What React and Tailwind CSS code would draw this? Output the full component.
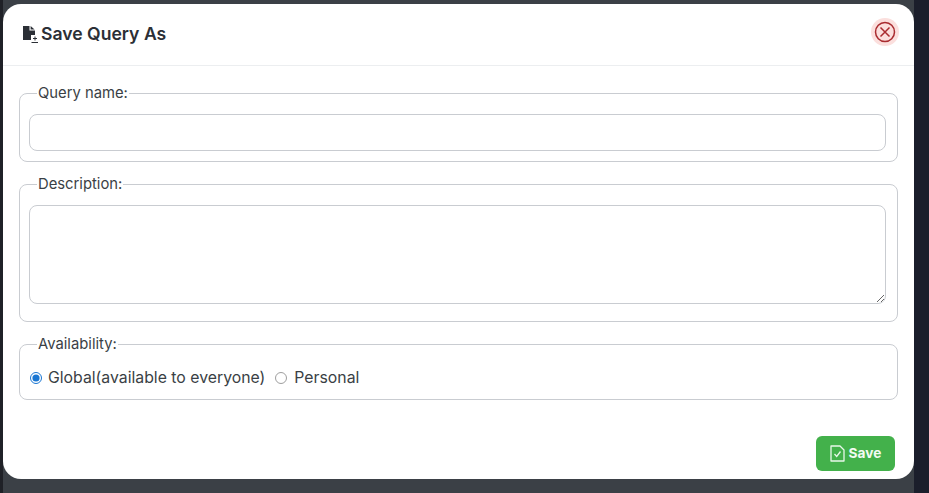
const fieldsetCls = "border border-[#c9ccd1] rounded-lg pl-[9px] pr-[11px] pb-[10px] m-0 min-w-0";
const legendCls = "ml-[8px] px-[1px] text-[14.8px] leading-5 text-[#3a3f45]";

function FileIcon() {
  return (
    <svg width="17" height="20" viewBox="0 0 17 20" className="shrink-0">
      <path d="M1 2h6.500v4.500h5.500V11H9v5H1z" fill="#2b2f36" />
      <path d="M8.600 2l4 3.500h-4z" fill="#2b2f36" />
      <path d="M13 12.500v4M11 14.500h4" stroke="#2b2f36" strokeWidth="1" />
      <path d="M9.500 18.500h6.500" stroke="#2b2f36" strokeWidth="1" />
    </svg>
  );
}

function CloseIcon() {
  return (
    <div className="w-[28px] h-[28px] rounded-full bg-[#fbdfdd] flex items-center justify-center">
      <svg width="22" height="22" viewBox="0 0 22 22" fill="none" stroke="#a92b2f" strokeWidth="1.5">
        <circle cx="11" cy="11" r="9.500" />
        <path d="M6.500 6.500l9 9M15.500 6.500l-9 9" />
      </svg>
    </div>
  );
}

function SaveIcon() {
  return (
    <svg width="15" height="17" viewBox="0 0 15 17" fill="none" stroke="#e9f7ea" strokeWidth="1.300">
      <path d="M1 1h9l4 4v11H1z" strokeLinejoin="round" />
      <path d="M4.500 9l2.200 2.500 3.800-5" />
    </svg>
  );
}

export default function App() {
  return (
    <div className="w-[929px] h-[493px] flex overflow-hidden bg-[#1b1e2b] font-['Inter','Liberation_Sans',sans-serif]">
      <div className="w-[3px] shrink-0 bg-[#1f2127]" />
      <div className="w-[911px] shrink-0 bg-[#3b4046] pt-[4px] h-full">
        <div className="w-full h-[475px] bg-white rounded-[18px] flex flex-col">
          <div className="h-[62px] shrink-0 border-b border-[#eceef0] flex items-center justify-between pl-[19px] pr-[15px] pb-[5px]">
            <div className="flex items-center gap-[2px] mt-[4px]">
              <FileIcon />
              <span className="text-[17.6px] font-semibold text-[#2b2f36]">Save Query As</span>
            </div>
            <CloseIcon />
          </div>

          <div className="flex flex-col gap-[12px] pl-[16px] pr-[16px] pt-[17px]">
            <fieldset className={fieldsetCls}>
              <legend className={legendCls}>Query name:</legend>
              <input type="text" className="block w-full h-[37px] mt-[11px] border border-[#c9ccd1] rounded-lg bg-white" />
            </fieldset>

            <fieldset className={fieldsetCls + " pb-[17px]"}>
              <legend className={legendCls}>Description:</legend>
              <textarea className="block w-full h-[99px] mt-[11px] border border-[#c9ccd1] rounded-lg bg-white" />
            </fieldset>

            <fieldset className={fieldsetCls}>
              <legend className={legendCls}>Availability:</legend>
              <div className="flex items-center h-[24px] mt-[12px] -mb-[1px] ml-[1px] text-[15.8px] text-[#3a3f45]">
                <input type="radio" name="availability" defaultChecked className="w-[12px] h-[12px] m-0 accent-[#1976d2]" />
                <span className="ml-[6px]">Global(available to everyone)</span>
                <input type="radio" name="availability" className="w-[12px] h-[12px] m-0 ml-[10px] opacity-70" />
                <span className="ml-[7px]">Personal</span>
              </div>
            </fieldset>
          </div>

          <div className="flex justify-end pr-[19px] mt-[36px]">
            <button className="w-[79px] h-[35px] rounded-md bg-[#43b14b] text-[#f2fbf2] text-[13.7px] font-bold flex items-center justify-center gap-[4px]">
              <SaveIcon />
              Save
            </button>
          </div>
        </div>
      </div>
      <div className="flex-1" />
    </div>
  );
}
